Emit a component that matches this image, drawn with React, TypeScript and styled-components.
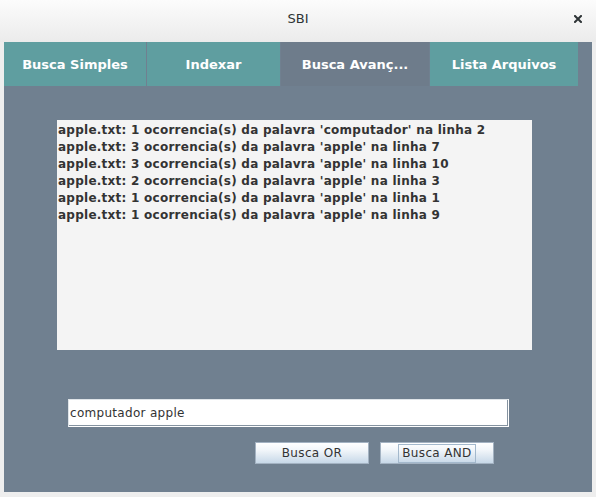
import React from "react";
import styled, { createGlobalStyle } from "styled-components";

const Global = createGlobalStyle`
  html, body { margin: 0; padding: 0; background: #eeeeee; }
  body { width: 596px; height: 497px; overflow: hidden; font-family: "DejaVu Sans", sans-serif; }
`;

const Window = styled.div`
  width: 596px;
  height: 497px;
  display: flex;
  flex-direction: column;
  background: #eeeeee;
`;

const TitleBar = styled.div`
  height: 42px;
  flex: none;
  display: flex;
  align-items: center;
  justify-content: center;
  position: relative;
  background: linear-gradient(#fcfcfc, #ebebeb);
`;

const Title = styled.span`
  font-family: "DejaVu Sans", sans-serif;
  font-size: 13px;
  color: #2e3436;
  margin-top: -5px;
`;

const CloseButton = styled.div`
  position: absolute;
  left: 574px;
  top: 15px;
  width: 8px;
  height: 8px;
  display: flex;
`;

const Body = styled.div`
  flex: 1;
  padding: 0 4px 5px 4px;
  display: flex;
`;

const Panel = styled.div`
  flex: 1;
  background: #708090;
  display: flex;
  flex-direction: column;
`;

const TabRow = styled.div`
  height: 44px;
  flex: none;
  display: flex;
  gap: 1px;
`;

const Tab = styled.div<{ $w: number; $active?: boolean }>`
  width: ${(p) => p.$w}px;
  flex: none;
  display: flex;
  align-items: center;
  justify-content: center;
  background: ${(p) => (p.$active ? "#6e7c8b" : "#5f9ea0")};
  color: #ffffff;
  font-family: "DejaVu Sans", sans-serif;
  font-weight: bold;
  font-size: 13px;
  padding-top: 1px;
`;

const Content = styled.div`
  flex: 1;
  display: flex;
  flex-direction: column;
  align-items: flex-start;
`;

const ResultArea = styled.div`
  margin: 34px 0 0 53px;
  width: 473px;
  height: 228px;
  padding: 2px 1px 0 1px;
  background: #f4f4f4;
  color: #333333;
  font-family: "DejaVu Sans", sans-serif;
  font-weight: bold;
  font-size: 12px;
  letter-spacing: 0.25px;
  line-height: 17px;
`;

const Line = styled.div`
  white-space: pre;
`;

const SearchField = styled.div`
  margin: 49px 0 0 64px;
  width: 438px;
  height: 26px;
  background: #ffffff;
  border: 1px solid #ffffff;
  border-top-color: #dfe4e8;
  border-left-color: #dfe4e8;
  box-shadow: inset -1px -1px 0 #8593a0;
  display: flex;
  align-items: center;
  padding-left: 1px;
  color: #333333;
  font-family: "DejaVu Sans", sans-serif;
  font-size: 12px;
  letter-spacing: 0.3px;
`;

const ButtonRow = styled.div`
  margin: 15px 0 0 251px;
  display: flex;
  gap: 11px;
`;

const Button = styled.div`
  width: 114px;
  height: 22px;
  box-sizing: border-box;
  border: 1px solid #a3b2c2;
  background: linear-gradient(#ffffff 0%, #f2f6fa 35%, #c7d8e8 100%);
  display: flex;
  align-items: center;
  justify-content: center;
  color: #333333;
  font-family: "DejaVu Sans", sans-serif;
  font-size: 12px;
  letter-spacing: 0.35px;
`;

const FocusRing = styled.span`
  box-sizing: border-box;
  height: 19px;
  margin-top: 1px;
  display: flex;
  align-items: center;
  border: 1px solid #a3b8cc;
  padding: 0 3px 1px 3px;
`;

const lines = [
  "apple.txt: 1 ocorrencia(s) da palavra 'computador' na linha 2",
  "apple.txt: 3 ocorrencia(s) da palavra 'apple' na linha 7",
  "apple.txt: 3 ocorrencia(s) da palavra 'apple' na linha 10",
  "apple.txt: 2 ocorrencia(s) da palavra 'apple' na linha 3",
  "apple.txt: 1 ocorrencia(s) da palavra 'apple' na linha 1",
  "apple.txt: 1 ocorrencia(s) da palavra 'apple' na linha 9",
];

const tabs = [
  { label: "Busca Simples", w: 142 },
  { label: "Indexar", w: 133 },
  { label: "Busca Avanç...", w: 148, active: true },
  { label: "Lista Arquivos", w: 148 },
];

export default function App() {
  return (
    <Window>
      <Global />
      <TitleBar>
        <Title>SBI</Title>
        <CloseButton>
          <svg width="8" height="8" viewBox="0 0 8 8">
            <path d="M1 1 L7 7 M7 1 L1 7" stroke="#2e3436" strokeWidth="2" strokeLinecap="square" />
          </svg>
        </CloseButton>
      </TitleBar>
      <Body>
        <Panel>
          <TabRow>
            {tabs.map((t) => (
              <Tab key={t.label} $w={t.w} $active={t.active}>
                {t.label}
              </Tab>
            ))}
          </TabRow>
          <Content>
            <ResultArea>
              {lines.map((l, i) => (
                <Line key={i}>{l}</Line>
              ))}
            </ResultArea>
            <SearchField>computador apple</SearchField>
            <ButtonRow>
              <Button>Busca OR</Button>
              <Button>
                <FocusRing>Busca AND</FocusRing>
              </Button>
            </ButtonRow>
          </Content>
        </Panel>
      </Body>
    </Window>
  );
}
